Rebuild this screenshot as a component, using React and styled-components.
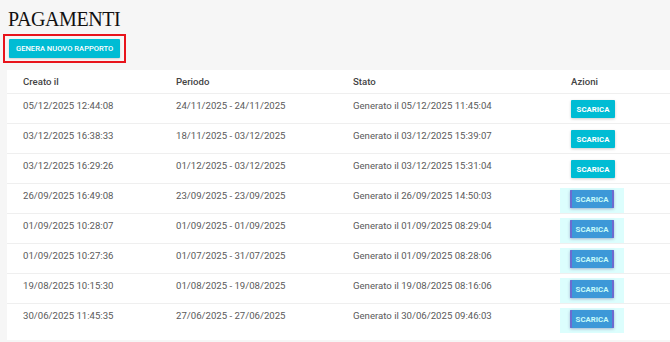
import React from "react";
import styled, { createGlobalStyle } from "styled-components";

const Global = createGlobalStyle`
  html, body { margin: 0; padding: 0; background: #f6f6f6; }
  body { overflow: hidden; width: 670px; height: 342px; }
`;

const Page = styled.div`
  padding: 8px 0 0 0;
  display: flex;
  flex-direction: column;
`;

const Title = styled.h1`
  margin: 0 0 0 8px;
  font-family: "Liberation Serif", "Times New Roman", serif;
  font-weight: 400;
  font-size: 20px;
  line-height: 22px;
  color: #111;
  letter-spacing: -0.4px;
`;

const Highlight = styled.div`
  align-self: flex-start;
  margin: 4px 0 0 3px;
  border: 2px solid #e8141c;
  padding: 3px 4px;
  display: flex;
`;

const PrimaryButton = styled.button`
  border: none;
  background: #00bcd4;
  color: #fff;
  font-family: Roboto, "Liberation Sans", sans-serif;
  font-weight: 500;
  font-size: 7.6px;
  text-transform: uppercase;
  height: 19px;
  padding: 0 7px;
  border-radius: 1px;
  box-shadow: 0 1px 2px rgba(0,0,0,0.15);
  cursor: pointer;
`;

const Card = styled.div`
  margin: 7px -20px 0 7px;
  background: #fff;
  padding: 0 0 6px 16px;
  font-family: Roboto, "Liberation Sans", sans-serif;
`;

const Row = styled.div`
  display: grid;
  grid-template-columns: 153px 177px 218px 1fr;
  height: ${p => (p.$head ? 24 : 30)}px;
  border-bottom: 1px solid ${p => (p.$last ? "transparent" : "#efefef")};
  margin-left: -16px;
  padding-left: 16px;
  box-sizing: border-box;
`;

const Cell = styled.div`
  font-size: 9.6px;
  color: ${p => (p.$head ? "#444" : "#5a5a5a")};
  font-weight: ${p => (p.$head ? 500 : 400)};
  padding-top: 6px;
  line-height: 12px;
  white-space: nowrap;
`;

const ActionCell = styled.div`
  padding-top: 6px;
  display: flex;
`;

const Glow = styled.div`
  display: flex;
  margin-left: ${p => (p.$on ? -11 : 0)}px;
  padding: ${p => (p.$on ? "2px 10px" : "0")};
  margin-top: ${p => (p.$on ? -2 : 0)}px;
  background: ${p => (p.$on ? "#dcfefd" : "transparent")};
`;

const SmallButton = styled.button`
  border: none;
  width: 44px;
  height: 18px;
  padding: 0;
  font-family: Roboto, "Liberation Sans", sans-serif;
  font-weight: 700;
  font-size: 7.8px;
  text-transform: uppercase;
  border-radius: 1px;
  background: ${p => (p.$alt ? "#3d98d8" : "#00bcd4")};
  color: ${p => (p.$alt ? "#c8fbf8" : "#fff")};
  box-shadow: ${p =>
    p.$alt
      ? "inset 2px 0 0 #6d6bd0, inset -2px 0 0 #6d6bd0, 0 1px 3px rgba(60,40,120,0.35)"
      : "0 1px 3px rgba(0,0,0,0.2)"};
`;

const data = [
  ["05/12/2025 12:44:08", "24/11/2025 - 24/11/2025", "Generato il 05/12/2025 11:45:04", false],
  ["03/12/2025 16:38:33", "18/11/2025 - 03/12/2025", "Generato il 03/12/2025 15:39:07", false],
  ["03/12/2025 16:29:26", "01/12/2025 - 03/12/2025", "Generato il 03/12/2025 15:31:04", false],
  ["26/09/2025 16:49:08", "23/09/2025 - 23/09/2025", "Generato il 26/09/2025 14:50:03", true],
  ["01/09/2025 10:28:07", "01/09/2025 - 01/09/2025", "Generato il 01/09/2025 08:29:04", true],
  ["01/09/2025 10:27:36", "01/07/2025 - 31/07/2025", "Generato il 01/09/2025 08:28:06", true],
  ["19/08/2025 10:15:30", "01/08/2025 - 19/08/2025", "Generato il 19/08/2025 08:16:06", true],
  ["30/06/2025 11:45:35", "27/06/2025 - 27/06/2025", "Generato il 30/06/2025 09:46:03", true],
];

export default function App() {
  return (
    <>
      <Global />
      <Page>
        <Title>PAGAMENTI</Title>
        <Highlight>
          <PrimaryButton>Genera nuovo rapporto</PrimaryButton>
        </Highlight>
        <Card>
          <Row $head>
            <Cell $head>Creato il</Cell>
            <Cell $head>Periodo</Cell>
            <Cell $head>Stato</Cell>
            <Cell $head>Azioni</Cell>
          </Row>
          {data.map((r, i) => (
            <Row key={i} $last={i === data.length - 1}>
              <Cell>{r[0]}</Cell>
              <Cell>{r[1]}</Cell>
              <Cell>{r[2]}</Cell>
              <ActionCell>
                <Glow $on={r[3]}>
                  <SmallButton $alt={r[3]}>Scarica</SmallButton>
                </Glow>
              </ActionCell>
            </Row>
          ))}
        </Card>
      </Page>
    </>
  );
}
